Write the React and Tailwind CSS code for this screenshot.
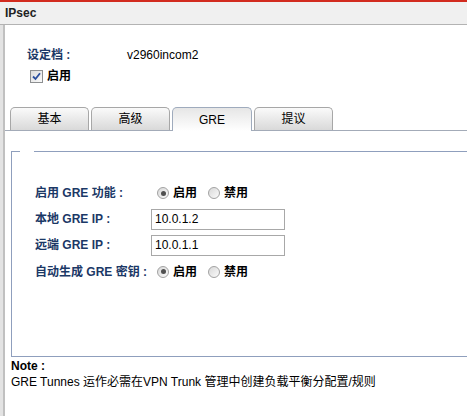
import React, { useState } from "react";

const FONT = { fontFamily: '"Liberation Sans", Arial, "Noto Sans CJK SC", sans-serif' };

const TABS = ["基本", "高级", "GRE", "提议"];

// Grey bevelled radio dot in the old router-UI look
const Radio = ({ checked, onClick }) => (
  <span
    onClick={onClick}
    className="flex h-[12px] w-[12px] shrink-0 items-center justify-center rounded-full border border-[#a2a2a2] bg-gradient-to-br from-[#d8d8d8] to-[#fbfbfb] cursor-pointer"
  >
    {checked && <span className="h-[5px] w-[5px] rounded-full bg-[#505050]" />}
  </span>
);

const RadioPair = ({ value, onChange }) => (
  <div className="flex items-center pl-[6px]">
    <Radio checked={value} onClick={() => onChange(true)} />
    <span className="ml-[4px] font-bold text-black">启用</span>
    <span className="ml-[11px]">
      <Radio checked={!value} onClick={() => onChange(false)} />
    </span>
    <span className="ml-[4px] font-bold text-black">禁用</span>
  </div>
);

const Row = ({ label, children, tall }) => (
  <div className={`flex items-center ${tall ? "h-[27px]" : "h-[26px]"}`}>
    <div className="w-[116px] shrink-0 font-bold text-[#1b3866]">{label}</div>
    {children}
  </div>
);

const IpInput = ({ value }) => (
  <input
    defaultValue={value}
    className="h-[21px] w-[134px] border border-[#a8a8a8] bg-white pl-[3px] text-[12px] text-black outline-none"
  />
);

const App = () => {
  const [activeTab, setActiveTab] = useState("GRE");
  const [enabled, setEnabled] = useState(true);
  const [greOn, setGreOn] = useState(true);
  const [autoKey, setAutoKey] = useState(true);

  return (
    <div className="flex h-[416px] w-[467px] flex-col overflow-hidden bg-white text-[12px] leading-[16px] text-black" style={FONT}>
      <div className="h-[2px] bg-[#d22b1f]" />
      <div className="flex h-[23px] items-center border-b border-[#b3b3b3] bg-[#f0f0f0] pl-[5px] font-bold text-[#222]">
        IPsec
      </div>

      <div className="flex flex-1">
        <div className="w-[3px] bg-[#e3e3e3]" />
        <div className="flex flex-1 flex-col border-l-2 border-[#c0c0c0]">
          {/* profile header */}
          <div className="flex pl-[22px] pt-[22px]">
            <span className="w-[100px] font-bold text-[#1b3866]">设定档 :</span>
            <span>v2960incom2</span>
          </div>
          <label className="mt-[5px] flex items-center pl-[25px]">
            <span
              onClick={() => setEnabled(!enabled)}
              className="flex h-[13px] w-[13px] items-center justify-center border border-[#8d8f91] bg-gradient-to-br from-[#dcdcdc] to-[#fafafa]"
            >
              {enabled && (
                <svg width="9" height="9" viewBox="0 0 9 9">
                  <path d="M1 4.5 L3.5 7 L8 1.2" fill="none" stroke="#2b4f9e" strokeWidth="1.8" />
                </svg>
              )}
            </span>
            <span className="ml-[4px] font-bold">启用</span>
          </label>

          {/* tab strip */}
          <div className="mt-[24px] flex h-[23px] items-end gap-[2px] border-b border-[#a3abb8] pl-[5px]">
            {TABS.map((t) =>
              t === activeTab ? (
                <button
                  key={t}
                  onClick={() => setActiveTab(t)}
                  className="-mb-px h-[24px] w-[80px] rounded-t-[5px] border border-b-0 border-[#9fabbd] bg-gradient-to-b from-[#e6e6e6] to-white text-[12px] text-black"
                >
                  {t}
                </button>
              ) : (
                <button
                  key={t}
                  onClick={() => setActiveTab(t)}
                  className="h-[23px] w-[79px] rounded-t-[5px] border border-b-0 border-[#a7a7a7] bg-gradient-to-b from-[#fafafa] to-[#d9d9d9] text-[12px] text-black"
                >
                  {t}
                </button>
              )
            )}
          </div>

          {/* GRE settings */}
          <fieldset className="ml-[6px] mt-[19px] h-[207px] border border-r-0 border-[#8f9fbd]">
            <legend className="ml-[8px] h-[2px] w-[14px]" />
            <div className="pl-[23px] pt-[28px]">
              <Row label="启用 GRE 功能 :">
                <RadioPair value={greOn} onChange={setGreOn} />
              </Row>
              <Row label="本地 GRE IP :">
                <IpInput value="10.0.1.2" />
              </Row>
              <Row label="远端 GRE IP :">
                <IpInput value="10.0.1.1" />
              </Row>
              <Row label="自动生成 GRE 密钥 :" tall>
                <RadioPair value={autoKey} onChange={setAutoKey} />
              </Row>
            </div>
          </fieldset>

          <div className="pl-[6px] pt-[1px]">
            <div className="font-bold">Note :</div>
            <div>GRE Tunnes 运作必需在VPN Trunk 管理中创建负载平衡分配置/规则</div>
          </div>
        </div>
      </div>
    </div>
  );
};

export default App;
